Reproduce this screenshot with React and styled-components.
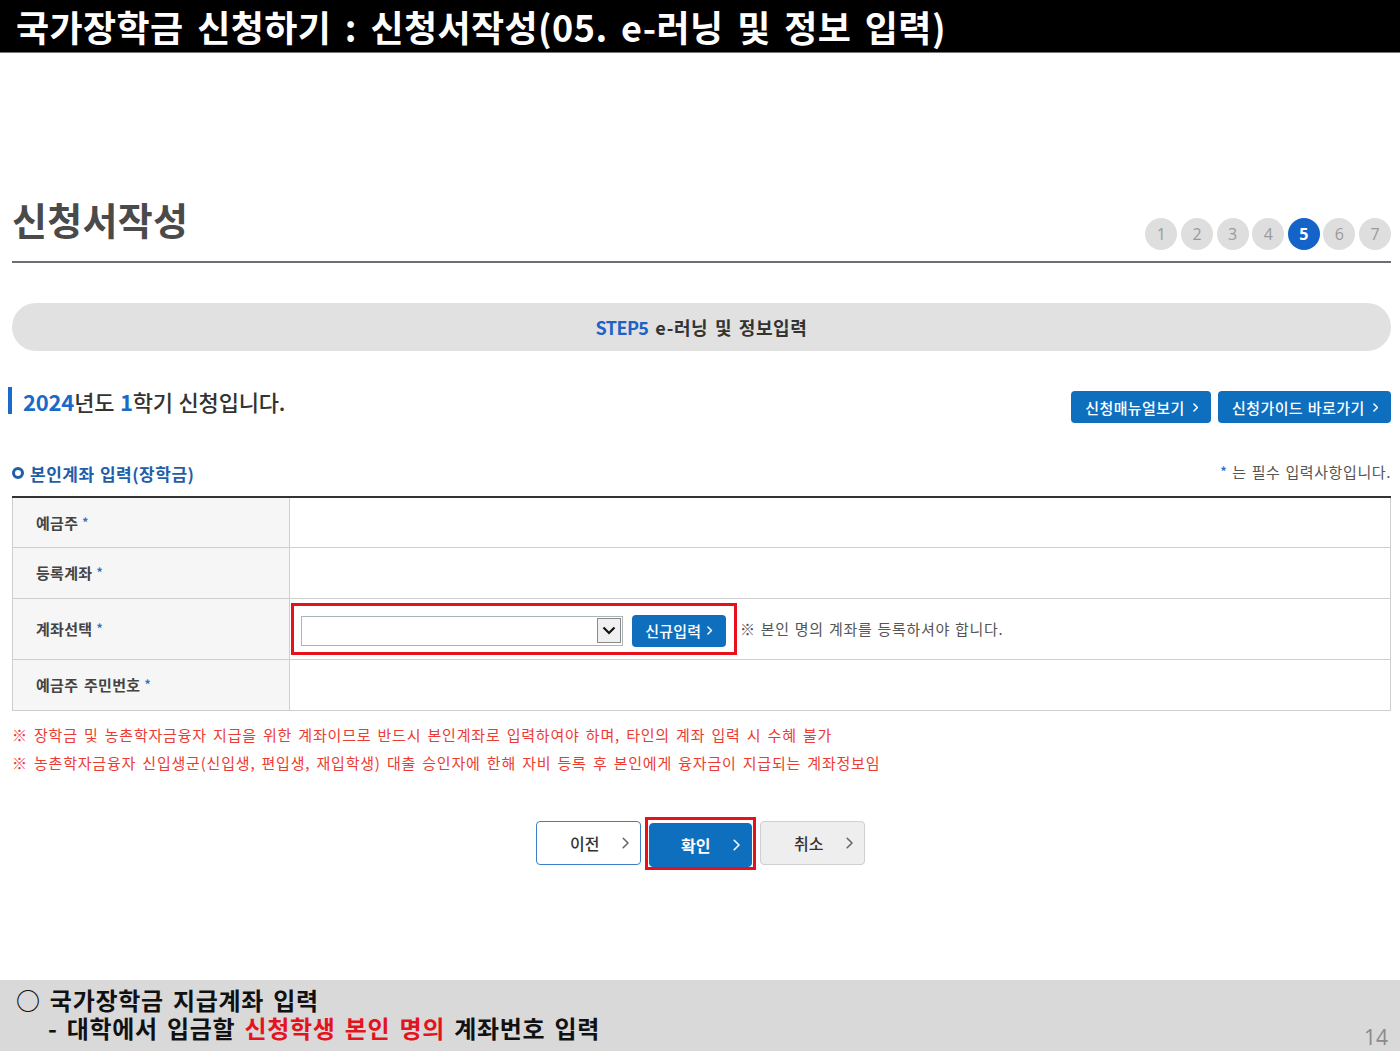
import React from "react";
import styled, { createGlobalStyle } from "styled-components";

const Global = createGlobalStyle`
  html, body { margin: 0; padding: 0; background: #fff; }
  body { font-family: "Noto Sans CJK KR", "Noto Sans", sans-serif; }
  * { box-sizing: border-box; }
`;

const Page = styled.div`
  width: 1400px;
  height: 1051px;
  display: flex;
  flex-direction: column;
  overflow: hidden;
`;

const TitleBar = styled.header`
  height: 53px;
  background: #000;
  border-bottom: 1px solid #777;
  color: #fff;
  font-size: 36px;
  font-weight: 700;
  line-height: 52px;
  padding-left: 16px;
  letter-spacing: 0.4px;
  word-spacing: 5px;
  white-space: nowrap;
`;

const Main = styled.main`
  flex: 1;
  padding: 0 9px 0 12px;
  display: flex;
  flex-direction: column;
`;

const HeaderRow = styled.div`
  margin-top: 143px;
  height: 67px;
  display: flex;
  justify-content: space-between;
  border-bottom: 2px solid #6e6e76;
`;

const PageHeading = styled.h1`
  margin: 0;
  font-size: 38px;
  line-height: 46px;
  font-weight: 700;
  color: #4a4a4a;
  letter-spacing: 0.3px;
`;

const Steps = styled.ol`
  list-style: none;
  margin: 0 0 11px;
  padding: 0;
  align-self: flex-end;
  display: flex;
  gap: 3.6px;
`;

const Step = styled.li`
  width: 32px;
  height: 32px;
  border-radius: 50%;
  display: flex;
  align-items: center;
  justify-content: center;
  font-size: 16px;
  font-family: "Open Sans", sans-serif;
  font-weight: ${(p) => (p.$active ? 700 : 400)};
  background: ${(p) => (p.$active ? "#1463c9" : "#dedede")};
  color: ${(p) => (p.$active ? "#fff" : "#9a9a9a")};
`;

const StepBanner = styled.div`
  margin-top: 40px;
  height: 48px;
  border-radius: 24px;
  background: #e1e1e1;
  display: flex;
  align-items: center;
  justify-content: center;
  gap: 7px;
  font-size: 18px;
  font-weight: 700;
  color: #333;
  word-spacing: 2px;
  letter-spacing: 0.6px;
`;

const StepTag = styled.span`
  color: #1d62c4;
  letter-spacing: -0.6px;
`;

const YearRow = styled.div`
  margin-top: 36px;
  display: flex;
  justify-content: space-between;
  align-items: flex-start;
`;

const YearTitle = styled.h2`
  margin: 0 0 0 -4px;
  border-left: 4px solid #1a6ac9;
  padding-left: 11px;
  height: 27px;
  display: flex;
  align-items: center;
  font-size: 22px;
  font-weight: 500;
  color: #333;
  letter-spacing: -0.2px;
  word-spacing: 1px;
`;

const Blue = styled.span`
  color: #1a6ac9;
  font-weight: 700;
`;

const LinkGroup = styled.div`
  display: flex;
  gap: 7px;
  margin-top: 4px;
`;

const LinkButton = styled.button`
  height: 32px;
  padding: 0 13px 0 14px;
  border: none;
  border-radius: 4px;
  background: #0f6fbf;
  color: #fff;
  font-family: inherit;
  font-size: 15px;
  font-weight: 500;
  display: flex;
  align-items: center;
  gap: 8px;
  letter-spacing: 0.4px;
  word-spacing: 1px;
`;

const SectionRow = styled.div`
  margin-top: 38px;
  display: flex;
  justify-content: space-between;
  align-items: center;
  height: 24px;
`;

const SectionTitle = styled.h3`
  margin: 0;
  display: flex;
  align-items: center;
  gap: 6px;
  font-size: 17px;
  font-weight: 700;
  color: #1f5ea8;
  letter-spacing: 0.5px;
  word-spacing: 1px;
`;

const Ring = styled.span`
  width: 12px;
  height: 12px;
  border: 3px solid #1f5ea8;
  border-radius: 50%;
`;

const Required = styled.p`
  margin: 0 0 3px;
  font-size: 15px;
  color: #555;
  letter-spacing: 0.6px;
  word-spacing: 1px;
`;

const Star = styled.span`
  color: #2c6fc9;
  font-size: 12px;
  font-weight: 700;
  vertical-align: 2px;
  margin: 0 ${(p) => (p.$gap ? "5px" : "0")} 0 4px;
`;

const FormTable = styled.table`
  margin-top: 11px;
  width: 100%;
  border-collapse: collapse;
  border-top: 2px solid #333;
`;

const Row = styled.tr`
  height: ${(p) => p.$h}px;
`;

const HeadCell = styled.th`
  width: 277px;
  background: #f6f6f6;
  border: 1px solid #cfcfcf;
  border-top: none;
  text-align: left;
  padding-left: 23px;
  font-size: 15px;
  font-weight: 700;
  color: #444;
  letter-spacing: 0.3px;
  word-spacing: 2px;
`;

const DataCell = styled.td`
  border: 1px solid #cfcfcf;
  border-top: none;
  padding: 0 0 0 1px;
`;

const FieldLine = styled.div`
  display: flex;
  align-items: center;
`;

const Highlight = styled.div`
  border: 3px solid #e8101a;
  display: flex;
  align-items: center;
  gap: 9px;
  padding: ${(p) => p.$pad || "9px 8px 5px 7px"};
`;

const SelectBox = styled.div`
  width: 322px;
  height: 30px;
  border: 1px solid #a9b3b8;
  background: #fff;
  display: flex;
  justify-content: flex-end;
  align-items: center;
  padding-right: 1px;
`;

const SelectArrow = styled.span`
  width: 24px;
  height: 25px;
  border: 1px solid #8a8a8a;
  background: #f0f0f0;
  display: flex;
  align-items: center;
  justify-content: center;
`;

const NewButton = styled.button`
  height: 32px;
  width: 94px;
  border: none;
  border-radius: 4px;
  background: #0f6fbf;
  color: #fff;
  font-family: inherit;
  font-size: 15px;
  font-weight: 500;
  display: flex;
  align-items: center;
  justify-content: center;
  gap: 6px;
  letter-spacing: 0.2px;
`;

const Hint = styled.span`
  margin-left: 3px;
  font-size: 15px;
  color: #555;
  letter-spacing: 0.7px;
  word-spacing: 1px;
`;

const Notes = styled.div`
  margin-top: 10px;
  color: #ec3b33;
  font-size: 15px;
  line-height: 28px;
  letter-spacing: 0.8px;
  word-spacing: 2px;
  white-space: nowrap;
`;

const ActionRow = styled.div`
  margin-top: 40px;
  display: flex;
  justify-content: center;
  align-items: center;
  gap: 4px;
  padding-right: 2px;
`;

const ActionButton = styled.button`
  width: ${(p) => p.$w || 105}px;
  height: 44px;
  border-radius: 4px;
  font-family: inherit;
  font-size: 16px;
  font-weight: ${(p) => (p.$variant === "primary" ? 700 : 500)};
  display: flex;
  align-items: center;
  padding: 0 11px 0 ${(p) => (p.$variant === "primary" ? 31 : 33)}px;
  border: 1px solid
    ${(p) =>
      p.$variant === "outline" ? "#3d7fc6" : p.$variant === "primary" ? "#0f6fbf" : "#cfcfcf"};
  background: ${(p) =>
    p.$variant === "primary" ? "#0f6fbf" : p.$variant === "outline" ? "#fff" : "#eeeeee"};
  color: ${(p) => (p.$variant === "primary" ? "#fff" : "#333")};
  & > svg { margin-left: auto; }
`;

const Footer = styled.footer`
  height: 71px;
  background: #d9d9d9;
  display: flex;
  justify-content: space-between;
  padding: 6px 12px 0 16px;
`;

const FooterText = styled.div`
  font-size: 24px;
  font-weight: 700;
  line-height: 28px;
  color: #111;
  letter-spacing: 0.7px;
  word-spacing: 3px;
  white-space: nowrap;
`;

const FooterIndent = styled.div`
  padding-left: 32px;
`;

const Red = styled.span`
  color: #e3141e;
`;

const PageNo = styled.span`
  align-self: flex-end;
  font-family: "Open Sans", sans-serif;
  font-size: 21px;
  color: #8a8a8a;
  line-height: 28px;
`;

const Chevron = ({ color = "#fff", size = 9, w = 1.6 }) => (
  <svg width={size * 0.6} height={size} viewBox="0 0 6 10" fill="none">
    <path d="M1 1l4 4-4 4" stroke={color} strokeWidth={w} strokeLinecap="round" strokeLinejoin="round" />
  </svg>
);

const DownArrow = () => (
  <svg width="14" height="9" viewBox="0 0 14 9" fill="none">
    <path d="M1.5 1.5l5.5 5.5 5.5-5.5" stroke="#111" strokeWidth="2.2" />
  </svg>
);

export default function App() {
  const steps = [1, 2, 3, 4, 5, 6, 7];
  return (
    <Page>
      <Global />
      <TitleBar>국가장학금 신청하기 : 신청서작성(05. e-러닝 및 정보 입력)</TitleBar>
      <Main>
        <HeaderRow>
          <PageHeading>신청서작성</PageHeading>
          <Steps>
            {steps.map((n) => (
              <Step key={n} $active={n === 5}>
                {n}
              </Step>
            ))}
          </Steps>
        </HeaderRow>

        <StepBanner>
          <StepTag>STEP5</StepTag>
          <span>e-러닝 및 정보입력</span>
        </StepBanner>

        <YearRow>
          <YearTitle>
            <Blue>2024</Blue>년도&nbsp;<Blue>1</Blue>학기 신청입니다.
          </YearTitle>
          <LinkGroup>
            <LinkButton>
              신청매뉴얼보기 <Chevron />
            </LinkButton>
            <LinkButton>
              신청가이드 바로가기 <Chevron />
            </LinkButton>
          </LinkGroup>
        </YearRow>

        <SectionRow>
          <SectionTitle>
            <Ring />
            본인계좌 입력(장학금)
          </SectionTitle>
          <Required>
            <Star $gap>*</Star>는 필수 입력사항입니다.
          </Required>
        </SectionRow>

        <FormTable>
          <tbody>
            <Row $h={50}>
              <HeadCell>
                예금주<Star>*</Star>
              </HeadCell>
              <DataCell />
            </Row>
            <Row $h={51}>
              <HeadCell>
                등록계좌<Star>*</Star>
              </HeadCell>
              <DataCell />
            </Row>
            <Row $h={61}>
              <HeadCell>
                계좌선택<Star>*</Star>
              </HeadCell>
              <DataCell>
                <FieldLine>
                  <Highlight>
                    <SelectBox>
                      <SelectArrow>
                        <DownArrow />
                      </SelectArrow>
                    </SelectBox>
                    <NewButton>
                      신규입력 <Chevron />
                    </NewButton>
                  </Highlight>
                  <Hint>※ 본인 명의 계좌를 등록하셔야 합니다.</Hint>
                </FieldLine>
              </DataCell>
            </Row>
            <Row $h={51}>
              <HeadCell>
                예금주 주민번호<Star>*</Star>
              </HeadCell>
              <DataCell />
            </Row>
          </tbody>
        </FormTable>

        <Notes>
          <div>※ 장학금 및 농촌학자금융자 지급을 위한 계좌이므로 반드시 본인계좌로 입력하여야 하며, 타인의 계좌 입력 시 수혜 불가</div>
          <div>※ 농촌학자금융자 신입생군(신입생, 편입생, 재입학생) 대출 승인자에 한해 자비 등록 후 본인에게 융자금이 지급되는 계좌정보임</div>
        </Notes>

        <ActionRow>
          <ActionButton $variant="outline">
            이전 <Chevron color="#666" size={12} w={1.3} />
          </ActionButton>
          <Highlight $pad="3px 1px 0">
            <ActionButton $variant="primary" $w={103}>
              확인 <Chevron color="#fff" size={12} w={1.3} />
            </ActionButton>
          </Highlight>
          <ActionButton $variant="plain">
            취소 <Chevron color="#666" size={12} w={1.3} />
          </ActionButton>
        </ActionRow>
      </Main>

      <Footer>
        <FooterText>
          <div>○ 국가장학금 지급계좌 입력</div>
          <FooterIndent>
            - 대학에서 입금할 <Red>신청학생 본인 명의</Red> 계좌번호 입력
          </FooterIndent>
        </FooterText>
        <PageNo>14</PageNo>
      </Footer>
    </Page>
  );
}
